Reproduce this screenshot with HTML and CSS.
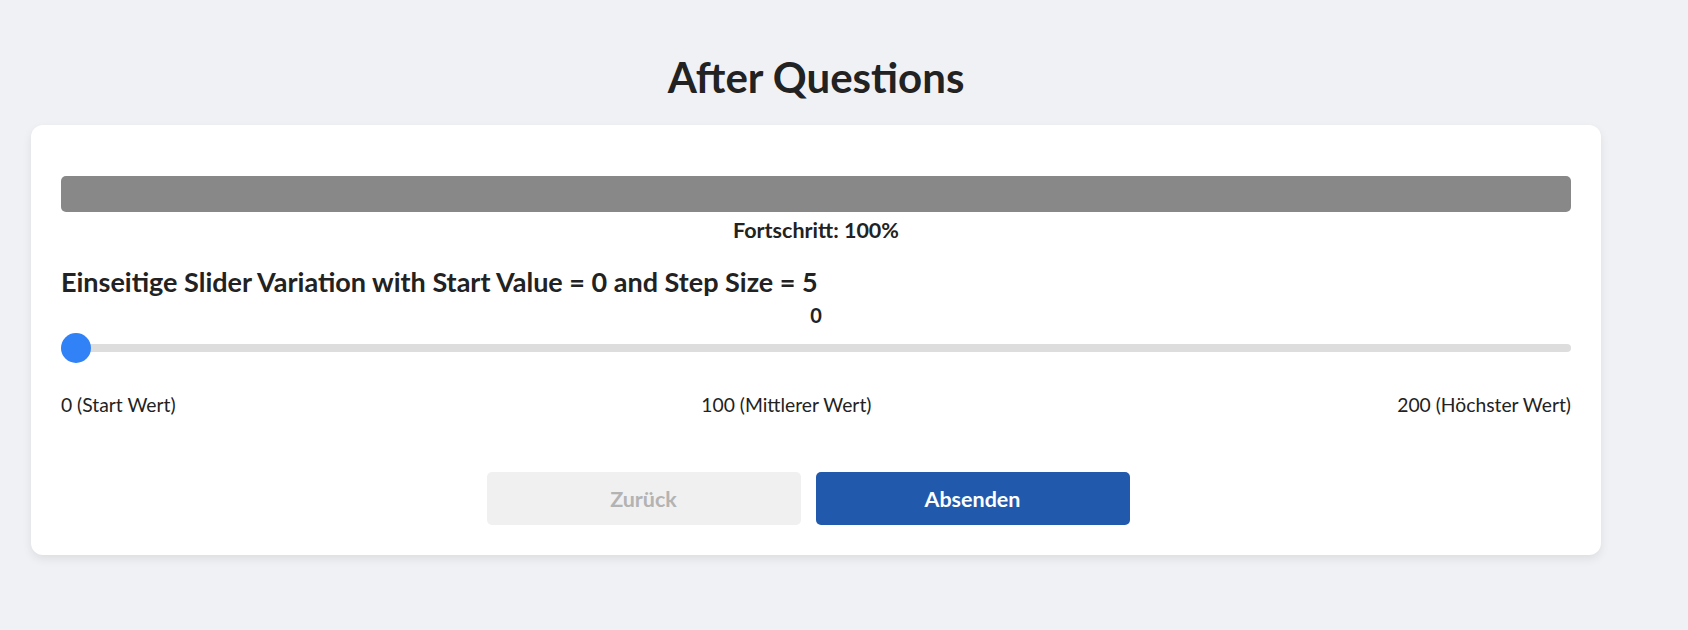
FILE: index.html
```html
<!DOCTYPE html>
<html lang="de">
<head>
<meta charset="utf-8">
<title>After Questions</title>
<link rel="stylesheet" href="styles.css">
</head>
<body>
<div class="page">
  <h1 class="title">After Questions</h1>
  <div class="card">
    <div class="progress">
      <div class="progress-bar"><div class="progress-fill" style="width:100%"></div></div>
      <div class="progress-text">Fortschritt: 100%</div>
    </div>
    <h2 class="question">Einseitige Slider Variation with Start Value = 0 and Step Size = 5</h2>
    <div class="value">0</div>
    <input class="slider" type="range" min="0" max="200" step="5" value="0">
    <div class="labels">
      <span>0 (Start Wert)</span>
      <span>100 (Mittlerer Wert)</span>
      <span>200 (Höchster Wert)</span>
    </div>
    <div class="buttons">
      <button class="btn btn-back" disabled>Zurück</button>
      <button class="btn btn-submit">Absenden</button>
    </div>
  </div>
</div>
</body>
</html>
```
FILE: styles.css
```css
html, body {
  margin: 0;
  padding: 0;
}
body {
  background: #f0f1f5;
  font-family: Lato, "Noto Sans", sans-serif;
  color: #222222;
  height: 630px;
  overflow: hidden;
}
.page {
  width: 1570px;
  margin-left: 31px;
  padding-top: 52px;
}
.title {
  margin: 0 0 23px;
  font-size: 42px;
  line-height: 1.2;
  font-weight: 700;
  text-align: center;
  color: #222222;
}
.card {
  background: #ffffff;
  border-radius: 12px;
  box-shadow: 0 4px 10px rgba(0, 0, 0, 0.08);
  padding: 30px;
  display: flex;
  flex-direction: column;
}
.progress {
  margin-top: 21px;
}
.progress-bar {
  height: 36px;
  border-radius: 5px;
  background: #e6e6e6;
  overflow: hidden;
}
.progress-fill {
  height: 100%;
  background: #888888;
}
.progress-text {
  margin-top: 6px;
  font-size: 21.5px;
  line-height: 1.2;
  font-weight: 700;
  text-align: center;
}
.question {
  margin: 21px 0 0;
  font-size: 27px;
  line-height: 1.25;
  font-weight: 700;
}
.value {
  margin-top: 4px;
  font-size: 20px;
  line-height: 1.2;
  font-weight: 700;
  text-align: center;
}
.slider {
  -webkit-appearance: none;
  appearance: none;
  display: block;
  width: 100%;
  height: 30px;
  margin: 6px 0 0;
  padding: 0;
  background: transparent;
}
.slider::-webkit-slider-runnable-track {
  height: 8px;
  border-radius: 4px;
  background: #dddddd;
}
.slider::-webkit-slider-thumb {
  -webkit-appearance: none;
  appearance: none;
  width: 30px;
  height: 30px;
  margin-top: -11px;
  border-radius: 50%;
  background: #3182f6;
  border: none;
}
.labels {
  margin-top: 30px;
  display: flex;
  justify-content: space-between;
  font-size: 19.3px;
  line-height: 1.25;
}
.buttons {
  margin-top: 55px;
  display: flex;
  justify-content: center;
  gap: 15px;
  padding-right: 16px;
}
.btn {
  width: 314px;
  height: 53px;
  border: none;
  border-radius: 5px;
  font-family: Lato, "Noto Sans", sans-serif;
  font-size: 21.5px;
  font-weight: 700;
}
.btn-back {
  background: #f0f0f0;
  color: #b3b3b3;
}
.btn-submit {
  background: #2159ad;
  color: #ffffff;
}
```
